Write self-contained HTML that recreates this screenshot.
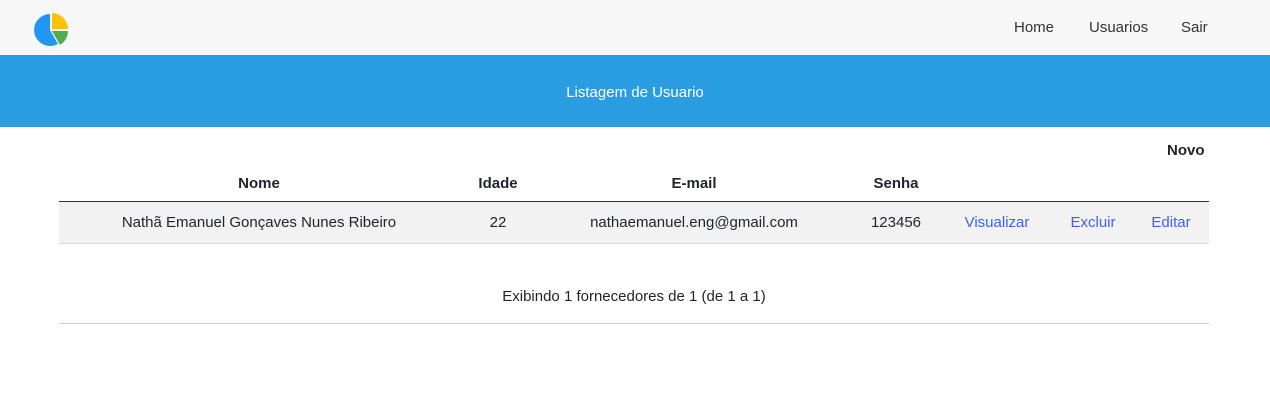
<!DOCTYPE html>
<html><head><style>
body{margin:0;width:1270px;height:414px;background:#fff;font-family:"Liberation Sans",sans-serif;color:#212529;font-size:15px;overflow:hidden}
.nav{height:55px;background:#f7f7f7;position:relative}
.nav a{position:absolute;top:19px;color:#333;text-decoration:none;font-size:15px}
.ban{height:72px;background:#2a9de2;color:#fff;text-align:center;line-height:76px;font-size:15px}
table{position:absolute;left:59px;top:166px;width:1150px;border-collapse:collapse;table-layout:fixed}
th{font-weight:bold;height:35px;text-align:center;border-bottom:1px solid #333;padding:0}
td{height:41px;text-align:center;background:#f2f2f2;border-bottom:1px solid #ddd;padding:0}
.l{color:#3a62f5}
</style></head><body>
<div class="nav">
<svg style="position:absolute;left:33px;top:12px" width="36" height="36" viewBox="0 0 36 36">
<path d="M17 18 L17 2 A16 16 0 1 0 25 31.9 Z" fill="#2196f3"/>
<path d="M19 17 L19 1 A16 16 0 0 1 35 17 Z" fill="#ffc107"/>
<path d="M19 19 L35 19 A16 16 0 0 1 27 32.9 Z" fill="#4caf50"/>
</svg>
<a style="left:1014px">Home</a><a style="left:1089px">Usuarios</a><a style="left:1181px">Sair</a>
</div>
<div class="ban">Listagem de Usuario</div>
<div style="position:absolute;left:1167px;top:142px;font-weight:bold">Novo</div>
<table>
<colgroup><col style="width:400px"><col style="width:78px"><col style="width:314px"><col style="width:90px"><col style="width:112px"><col style="width:80px"><col style="width:76px"></colgroup>
<tr><th>Nome</th><th>Idade</th><th>E-mail</th><th>Senha</th><th></th><th></th><th></th></tr>
<tr><td>Nathã Emanuel Gonçaves Nunes Ribeiro</td><td>22</td><td>nathaemanuel.eng@gmail.com</td><td>123456</td><td class="l">Visualizar</td><td class="l">Excluir</td><td class="l">Editar</td></tr>
</table>
<div style="position:absolute;left:59px;width:1150px;top:288px;text-align:center">Exibindo 1 fornecedores de 1 (de 1 a 1)</div>
<div style="position:absolute;left:59px;width:1150px;top:323px;border-top:1px solid #ccc"></div>
</body></html>
